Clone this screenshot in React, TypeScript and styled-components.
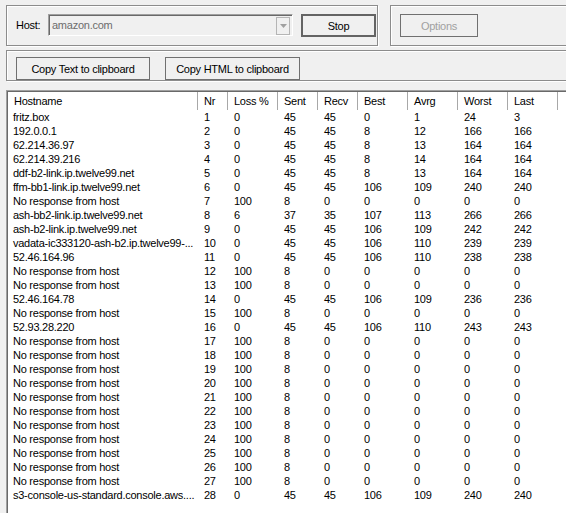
import React from "react";
import styled, { createGlobalStyle } from "styled-components";

const Global = createGlobalStyle`
  html, body {
    margin: 0;
    padding: 0;
    background: #f0f0f0;
    overflow: hidden;
    width: 566px;
    height: 513px;
  }
  body {
    font-family: "Liberation Sans", Arial, sans-serif;
    font-size: 11px;
    letter-spacing: -0.25px;
    color: #000;
  }
`;

const Window = styled.div`
  width: 640px;
  padding: 5px 0 0 6px;
  box-sizing: border-box;
  display: flex;
  flex-direction: column;
`;

const TopRow = styled.div`
  display: flex;
  gap: 12px;
`;

const GroupBox = styled.div<{ $w?: number; $h: number }>`
  box-sizing: border-box;
  width: ${(p) => (p.$w ? `${p.$w}px` : "auto")};
  flex: ${(p) => (p.$w ? "none" : "1")};
  height: ${(p) => p.$h}px;
  border: 1px solid #8c8c8c;
  box-shadow: inset 1px 1px 0 #fff, 1px 1px 0 #fff;
  display: flex;
  align-items: flex-start;
`;

const HostGroup = styled(GroupBox)`
  padding: 8px 0 0 9px;
`;

const OptionsGroup = styled(GroupBox)`
  padding: 8px 0 0 9px;
`;

const CopyGroup = styled(GroupBox)`
  margin-top: 4px;
  padding: 6px 0 0 9px;
  gap: 15px;
`;

const Label = styled.span`
  width: 32px;
  height: 22px;
  line-height: 22px;
  flex: none;
`;

const Combo = styled.div`
  box-sizing: border-box;
  width: 245px;
  height: 22px;
  border-top: 1px solid #a0a0a0;
  border-left: 1px solid #a0a0a0;
  border-right: 1px solid #fff;
  border-bottom: 1px solid #fff;
  box-shadow: inset 1px 1px 0 #696969;
  display: flex;
  align-items: center;
  padding: 0 2px 0 3px;
  color: #6d6d6d;
  margin-right: 8px;
`;

const ComboText = styled.span`
  flex: 1;
`;

const ComboButton = styled.div`
  box-sizing: border-box;
  width: 14px;
  height: 18px;
  border: 1px solid #b5b5b5;
  background: #f0f0f0;
  display: flex;
  align-items: center;
  justify-content: center;
  margin-top: 1px;
`;

const Button = styled.div<{ $w: number; $default?: boolean; $disabled?: boolean }>`
  box-sizing: border-box;
  width: ${(p) => p.$w}px;
  height: 23px;
  border: ${(p) => (p.$default ? "2px solid #646464" : "1px solid #707070")};
  background: #f0f0f0;
  color: ${(p) => (p.$disabled ? "#a0a0a0" : "#000")};
  display: flex;
  align-items: center;
  justify-content: center;
  flex: none;
`;

const ListFrame = styled.div`
  margin-top: 9px;
  box-sizing: border-box;
  height: 440px;
  border-top: 1px solid #a0a0a0;
  border-left: 1px solid #a0a0a0;
  box-shadow: inset 1px 1px 0 #696969;
  background: #fff;
  padding: 1px 0 0 1px;
`;

const Grid = styled.div`
  display: grid;
  grid-template-columns: 190px 30px 50px 40px 40px 50px 50px 50px 50px 1fr;
`;

const HeadCell = styled.div`
  box-sizing: border-box;
  height: 18px;
  line-height: 18px;
  padding-left: 6px;
  border-right: 1px solid #a8a8a8;
  white-space: nowrap;
  overflow: hidden;
`;

const Cell = styled.div<{ $host?: boolean }>`
  height: 14px;
  line-height: 14px;
  padding-left: ${(p) => (p.$host ? "5px" : "6px")};
  white-space: nowrap;
  overflow: hidden;
`;

const headers = ["Hostname", "Nr", "Loss %", "Sent", "Recv", "Best", "Avrg", "Worst", "Last", ""];

const nr = "No response from host";
const rows: (string | number)[][] = [
  ["fritz.box", 1, 0, 45, 45, 0, 1, 24, 3],
  ["192.0.0.1", 2, 0, 45, 45, 8, 12, 166, 166],
  ["62.214.36.97", 3, 0, 45, 45, 8, 13, 164, 164],
  ["62.214.39.216", 4, 0, 45, 45, 8, 14, 164, 164],
  ["ddf-b2-link.ip.twelve99.net", 5, 0, 45, 45, 8, 13, 164, 164],
  ["ffm-bb1-link.ip.twelve99.net", 6, 0, 45, 45, 106, 109, 240, 240],
  [nr, 7, 100, 8, 0, 0, 0, 0, 0],
  ["ash-bb2-link.ip.twelve99.net", 8, 6, 37, 35, 107, 113, 266, 266],
  ["ash-b2-link.ip.twelve99.net", 9, 0, 45, 45, 106, 109, 242, 242],
  ["vadata-ic333120-ash-b2.ip.twelve99-...", 10, 0, 45, 45, 106, 110, 239, 239],
  ["52.46.164.96", 11, 0, 45, 45, 106, 110, 238, 238],
  [nr, 12, 100, 8, 0, 0, 0, 0, 0],
  [nr, 13, 100, 8, 0, 0, 0, 0, 0],
  ["52.46.164.78", 14, 0, 45, 45, 106, 109, 236, 236],
  [nr, 15, 100, 8, 0, 0, 0, 0, 0],
  ["52.93.28.220", 16, 0, 45, 45, 106, 110, 243, 243],
  ...Array.from({ length: 11 }, (_, i) => [nr, 17 + i, 100, 8, 0, 0, 0, 0, 0]),
  ["s3-console-us-standard.console.aws....", 28, 0, 45, 45, 106, 109, 240, 240],
];

export default function App() {
  return (
    <>
      <Global />
      <Window>
        <TopRow>
          <HostGroup $w={372} $h={41}>
            <Label>Host:</Label>
            <Combo>
              <ComboText>amazon.com</ComboText>
              <ComboButton>
                <svg width="7" height="4" viewBox="0 0 7 4">
                  <path d="M0 0h7L3.5 4z" fill="#a0a0a0" />
                </svg>
              </ComboButton>
            </Combo>
            <Button $w={75} $default>
              Stop
            </Button>
          </HostGroup>
          <OptionsGroup $h={41}>
            <Button $w={78} $disabled>
              Options
            </Button>
          </OptionsGroup>
        </TopRow>
        <CopyGroup $h={36}>
          <Button $w={134}>Copy Text to clipboard</Button>
          <Button $w={135}>Copy HTML to clipboard</Button>
        </CopyGroup>
        <ListFrame>
          <Grid>
            {headers.map((h, i) => (
              <HeadCell key={i}>{h}</HeadCell>
            ))}
            {rows.map((r, ri) => (
              <React.Fragment key={ri}>
                {r.map((v, ci) => (
                  <Cell key={ci} $host={ci === 0}>
                    {v}
                  </Cell>
                ))}
                <Cell />
              </React.Fragment>
            ))}
          </Grid>
        </ListFrame>
      </Window>
    </>
  );
}
